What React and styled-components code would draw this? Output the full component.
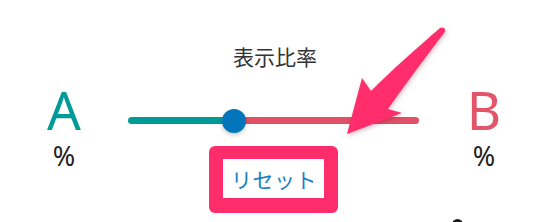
import React from 'react';
import styled, { createGlobalStyle } from 'styled-components';

const GlobalStyle = createGlobalStyle`
  html, body {
    margin: 0;
    padding: 0;
    background: #fff;
  }
  body {
    font-family: "Noto Sans", "Noto Sans CJK JP", sans-serif;
    width: 540px;
    height: 222px;
    overflow: hidden;
  }
`;

const Stage = styled.div`
  position: relative;
  width: 540px;
  height: 222px;
  overflow: hidden;
`;

const Ratio = styled.div`
  display: grid;
  grid-template-columns: 128px 291px 1fr;
  align-items: start;
  padding-top: 46px;
`;

const Side = styled.div`
  display: flex;
  flex-direction: column;
  align-items: center;
  padding-top: 35px;
  padding-left: ${(p) => p.$shift || 0}px;
`;

const Letter = styled.div`
  font-size: 53px;
  line-height: 58px;
  color: ${(p) => p.$color};
`;

const Percent = styled.div`
  margin-top: 2px;
  font-size: 27px;
  line-height: 30px;
  color: #222;
`;

const Middle = styled.div`
  display: flex;
  flex-direction: column;
  align-items: center;
`;

const Title = styled.div`
  font-family: "Noto Sans CJK JP", sans-serif;
  font-size: 21px;
  line-height: 1;
  color: #333;
  margin-left: 3px;
`;

const Track = styled.div`
  position: relative;
  width: 291px;
  height: 7px;
  margin-top: 50px;
  border-radius: 4px;
  background: linear-gradient(to right, #009b96 0 36%, #e05166 36% 100%);
`;

const Knob = styled.div`
  position: absolute;
  top: 50%;
  left: ${(p) => p.$at}px;
  width: 24px;
  height: 24px;
  margin: -12px 0 0 -12px;
  border-radius: 50%;
  background: #0376bb;
  box-shadow: 0 2px 4px rgba(0, 0, 0, 0.22);
`;

const Highlight = styled.div`
  margin-top: 22px;
  padding: 13px 14px 15px;
  border-radius: 6px;
  background: #ff2d6c;
`;

const ResetButton = styled.button`
  display: block;
  width: 101px;
  height: 39px;
  padding: 0 0 0 1px;
  border: none;
  background: #fff;
  font-family: "Noto Sans CJK JP", sans-serif;
  font-size: 21px;
  letter-spacing: 0.5px;
  color: #1a7fc3;
  cursor: pointer;
`;

const Arrow = styled.svg`
  position: absolute;
  left: 330px;
  top: 20px;
  filter: drop-shadow(1px 2px 2px rgba(120, 0, 40, 0.25));
`;

const PeekDot = styled.div`
  position: absolute;
  left: 452px;
  top: 219px;
  width: 11px;
  height: 11px;
  border-radius: 50%;
  background: #1c1c1c;
`;

export default function App() {
  return (
    <Stage>
      <GlobalStyle />
      <Ratio>
        <Side>
          <Letter $color="#009b96">A</Letter>
          <Percent>%</Percent>
        </Side>
        <Middle>
          <Title>表示比率</Title>
          <Track>
            <Knob $at={106} />
          </Track>
          <Highlight>
            <ResetButton>リセット</ResetButton>
          </Highlight>
        </Middle>
        <Side $shift={9}>
          <Letter $color="#e35568">B</Letter>
          <Percent>%</Percent>
        </Side>
      </Ratio>
      <Arrow width="120" height="120" viewBox="0 0 120 120">
        <path
          d="M17 114 L32 58 L41 71 C62 50 88 27 110 8 C114 6 117 10 114 13 C95 38 77 62 58 89 L72 93 Z"
          fill="#ff2d6c"
        />
      </Arrow>
      <PeekDot />
    </Stage>
  );
}
